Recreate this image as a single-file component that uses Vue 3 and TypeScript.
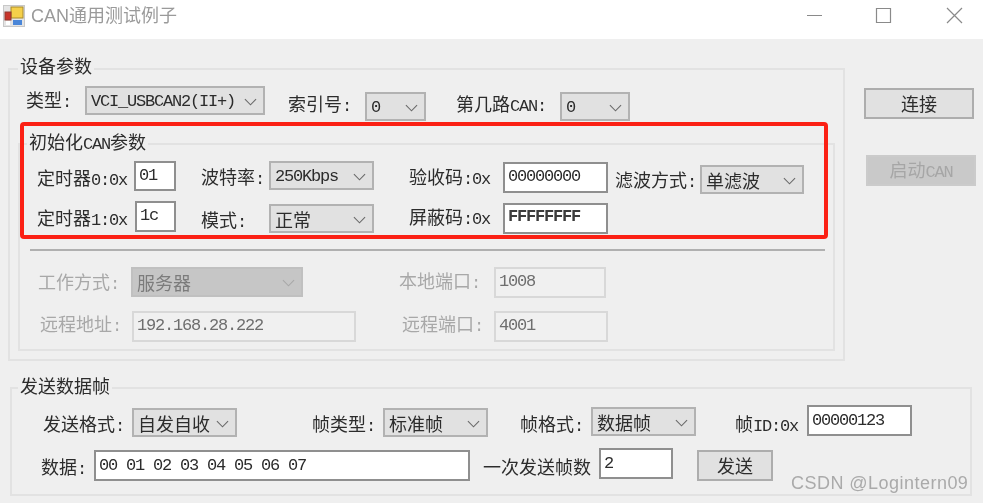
<script setup lang="ts">
const chevron = "M1 1L7 7L13 1"
</script>

<template>
  <div class="win">
    <header class="titlebar">
      <svg class="appicon" width="22" height="22" viewBox="0 0 22 22">
        <rect x="0.5" y="0.5" width="21" height="21" fill="#e4e4e4" stroke="#c8c8c8" />
        <rect x="8" y="2" width="12" height="11" fill="#f5d04a" stroke="#a88a2a" />
        <rect x="2" y="7" width="6" height="8" fill="#c8352b" stroke="#8f3a30" />
        <rect x="10" y="15" width="9" height="5" fill="#4a86d8" />
        <rect x="3" y="16" width="4" height="4" fill="#fff" />
      </svg>
      <span class="apptitle">CAN通用测试例子</span>
      <svg class="caption" width="177" height="18" viewBox="0 0 177 18">
        <path d="M1 9.5H16M70.5 2.5H84.5V16.5H70.5ZM141 2L156 17M156 2L141 17" fill="none" stroke="#8a8a8a" stroke-width="1.2" />
      </svg>
    </header>

    <main class="body">
      <div class="top">
        <section class="group g-device">
          <h3 class="legend l-device">设备参数</h3>
          <div class="row r1">
            <label class="lb w59 ml16">类型<span class="a">:</span></label>
            <div class="sel asc w180 h29"><span class="a">VCI_USBCAN2(II+)</span><svg class="chev" viewBox="0 0 14 8"><path :d="chevron" /></svg></div>
            <label class="lb w77 ml23 mt4">索引号<span class="a">:</span></label>
            <div class="sel asc w61 h29 mt6"><span class="a">0</span><svg class="chev" viewBox="0 0 14 8"><path :d="chevron" /></svg></div>
            <label class="lb w104 ml30 mt4">第几路<span class="a">CAN:</span></label>
            <div class="sel asc w70 h29 mt6"><span class="a">0</span><svg class="chev" viewBox="0 0 14 8"><path :d="chevron" /></svg></div>
          </div>

          <section class="group g-init">
            <h3 class="legend l-init">初始化<span class="a">CAN</span>参数</h3>
            <div class="row ra">
              <label class="lb w97 ml17 mt3">定时器<span class="a">0:0x</span></label>
              <input class="tb w42 h30" value="01" readonly />
              <label class="lb w68 ml25 mt2">波特率<span class="a">:</span></label>
              <div class="sel asc w105 h29"><span class="a">250Kbps</span><svg class="chev" viewBox="0 0 14 8"><path :d="chevron" /></svg></div>
              <label class="lb w94 ml35 mt2">验收码<span class="a">:0x</span></label>
              <input class="tb w105 h31 mt1" value="00000000" readonly />
              <label class="lb w85 ml7 mt5">滤波方式<span class="a">:</span></label>
              <div class="sel w104 h29 mt4">单滤波<svg class="chev" viewBox="0 0 14 8"><path :d="chevron" /></svg></div>
            </div>
            <div class="row rb">
              <label class="lb w98 ml17 mt3">定时器<span class="a">1:0x</span></label>
              <input class="tb w41 h31" value="1c" readonly />
              <label class="lb w68 ml25 mt5">模式<span class="a">:</span></label>
              <div class="sel w105 h29 mt3">正常<svg class="chev" viewBox="0 0 14 8"><path :d="chevron" /></svg></div>
              <label class="lb w94 ml35 mt2">屏蔽码<span class="a">:0x</span></label>
              <input class="tb w105 h31 mt2 strong" value="FFFFFFFF" readonly />
            </div>
            <hr class="sep" />
            <div class="row rc off">
              <label class="lb w93 ml18 mt1">工作方式<span class="a">:</span></label>
              <div class="sel dis w172 h30">服务器<svg class="chev" viewBox="0 0 14 8"><path :d="chevron" /></svg></div>
              <label class="lb w95 ml96">本地端口<span class="a">:</span></label>
              <input class="tb dis w112 h31" value="1008" disabled />
            </div>
            <div class="row rd off">
              <label class="lb w92 ml20">远程地址<span class="a">:</span></label>
              <input class="tb dis w224 h31 mt1" value="192.168.28.222" disabled />
              <label class="lb w92 ml46">远程端口<span class="a">:</span></label>
              <input class="tb dis w114 h31 mt1" value="4001" disabled />
            </div>
          </section>
        </section>

        <aside class="side">
          <button class="btn b-connect">连接</button>
          <button class="btn b-start" disabled>启动<span class="a">CAN</span></button>
        </aside>
      </div>

      <section class="group g-send">
        <h3 class="legend l-send">发送数据帧</h3>
        <div class="row re">
          <label class="lb w89 ml31 mt5">发送格式<span class="a">:</span></label>
          <div class="sel w105 h29 mt3">自发自收<svg class="chev" viewBox="0 0 14 8"><path :d="chevron" /></svg></div>
          <label class="lb w71 ml75 mt5">帧类型<span class="a">:</span></label>
          <div class="sel w105 h29 mt3">标准帧<svg class="chev" viewBox="0 0 14 8"><path :d="chevron" /></svg></div>
          <label class="lb w71 ml32 mt5">帧格式<span class="a">:</span></label>
          <div class="sel w105 h29 mt2">数据帧<svg class="chev" viewBox="0 0 14 8"><path :d="chevron" /></svg></div>
          <label class="lb w72 ml39 mt5">帧<span class="a">ID:0x</span></label>
          <input class="tb w105 h31" value="00000123" readonly />
        </div>
        <div class="row rf">
          <label class="lb w53 ml29 mt5">数据<span class="a">:</span></label>
          <input class="tb w376 h31 mt2" value="00 01 02 03 04 05 06 07" readonly />
          <label class="lb w116 ml13 mt5">一次发送帧数</label>
          <input class="tb w74 h31" value="2" readonly />
          <button class="btn w76 ml24 mt2">发送</button>
        </div>
      </section>
    </main>

    <div class="redbox"></div>
    <div class="mark">CSDN @Logintern09</div>
  </div>
</template>

<style>
html, body { margin: 0; background: #efefef; }
</style>

<style scoped>
.win {
  position: relative;
  width: 983px;
  height: 503px;
  overflow: hidden;
  background: #efefef;
  color: #2c2c2c;
  font-family: "Noto Sans CJK SC", "Liberation Sans", sans-serif;
  font-size: 18px;
  filter: blur(0.45px);
}
.a {
  font-family: "Liberation Mono", monospace;
  font-size: 17px;
  letter-spacing: -1.2px;
  line-height: 1;
}

.titlebar {
  display: flex;
  align-items: center;
  height: 39px;
  padding-left: 3px;
  box-sizing: border-box;
  background: #fff;
}
.appicon { flex: none; margin-top: -8px; }
.apptitle {
  margin-left: 6px;
  margin-top: -8px;
  font-family: "Liberation Sans", "Noto Sans CJK SC", sans-serif;
  font-size: 18px;
  line-height: 24px;
  color: #9a9a9a;
}
.caption { margin-left: auto; margin-top: -10px; }

.body { padding: 29px 0 0 8px; }
.top { display: flex; align-items: flex-start; }

.group {
  position: relative;
  box-sizing: border-box;
  border: 2px solid #e2e2e2;
}
.g-device { flex: none; width: 837px; height: 293px; }
.g-init { width: 817px; height: 208px; margin: 22px 0 0 8px; }
.g-send { width: 962px; height: 109px; margin: 26px 0 0 2px; }

.legend {
  position: absolute;
  margin: 0;
  padding: 0 2px;
  background: #efefef;
  font-size: 18px;
  font-weight: 400;
  line-height: 22px;
}
.l-device { left: 8px; top: -16px; }
.l-init { left: 7px; top: -15px; }
.l-send { left: 6px; top: -15px; }

.row { display: flex; align-items: flex-start; }
.r1 { height: 35px; margin-top: 16px; }
.ra { height: 40px; margin-top: 16px; }
.rb { height: 39px; }
.rc { height: 43px; }
.rd { height: 31px; }
.re { height: 43px; margin-top: 16px; }
.rf { height: 33px; }

.lb { flex: none; box-sizing: border-box; height: 30px; line-height: 26px; white-space: nowrap; }
.off .lb { color: #a8a8a8; }

.sel {
  position: relative;
  flex: none;
  box-sizing: border-box;
  padding-left: 4px;
  border: 2px solid #b2b2b2;
  background: #e1e1e1;
  line-height: 26px;
  white-space: nowrap;
}
.sel.asc { line-height: 21px; }
.sel.dis { background: #c6c6c6; border-color: #c0c0c0; color: #7c7c7c; }
.chev {
  position: absolute;
  right: 6px;
  top: 10px;
  width: 13px;
  height: 8px;
  fill: none;
  stroke: #6a6a6a;
  stroke-width: 1.2;
}
.sel.dis .chev { stroke: #a8a8a8; }

.tb {
  flex: none;
  display: block;
  box-sizing: border-box;
  margin-left: 0;
  margin-right: 0;
  padding: 0 0 2px 3px;
  border: 2px solid #8f8f8f;
  border-radius: 0;
  outline: none;
  background: #fff;
  color: #2c2c2c;
  font-family: "Liberation Mono", monospace;
  font-size: 17px;
  letter-spacing: -1.2px;
}
.g-send .tb { padding-bottom: 0; }
.tb.strong { padding-bottom: 5px; font-weight: 700; color: #3c3c3c; }
.tb.dis {
  border: 2px solid #d8d8d8;
  background: #f0f0f0;
  color: #6e6e6e;
  opacity: 1;
}

.sep {
  margin: 9px 0 16px 10px;
  width: 795px;
  height: 2px;
  border: 0;
  background: #b0b0b0;
}

.side { display: flex; flex-direction: column; margin-left: 19px; padding-top: 20px; }
.btn {
  flex: none;
  box-sizing: border-box;
  height: 31px;
  padding: 0 0 1px;
  border: 2px solid #adadad;
  border-radius: 0;
  background: #e1e1e1;
  color: #2c2c2c;
  font-family: "Noto Sans CJK SC", sans-serif;
  font-size: 18px;
  line-height: 24px;
}
.b-connect { width: 110px; }
.b-start {
  width: 110px;
  margin: 36px 0 0 2px;
  padding-bottom: 3px;
  border-color: #cbcbcb;
  background: #c9c9c9;
  color: #a6a6a6;
}

.redbox {
  position: absolute;
  left: 20px;
  top: 122px;
  width: 808px;
  height: 117px;
  box-sizing: border-box;
  border: 4px solid #fb2014;
  border-radius: 4px;
}
.mark {
  position: absolute;
  left: 791px;
  top: 471px;
  font-family: "Liberation Sans", sans-serif;
  font-size: 18px;
  letter-spacing: 0.47px;
  line-height: 24px;
  color: #aaa;
  white-space: nowrap;
}

.w41 { width: 41px; } .w42 { width: 42px; } .w53 { width: 53px; } .w59 { width: 59px; }
.w61 { width: 61px; } .w68 { width: 68px; } .w70 { width: 70px; } .w71 { width: 71px; }
.w72 { width: 72px; } .w74 { width: 74px; } .w76 { width: 76px; } .w77 { width: 77px; }
.w85 { width: 85px; } .w89 { width: 89px; } .w92 { width: 92px; } .w93 { width: 93px; }
.w94 { width: 94px; } .w95 { width: 95px; } .w97 { width: 97px; } .w98 { width: 98px; }
.w104 { width: 104px; } .w105 { width: 105px; } .w112 { width: 112px; } .w114 { width: 114px; }
.w116 { width: 116px; } .w172 { width: 172px; } .w180 { width: 180px; } .w224 { width: 224px; }
.w376 { width: 376px; }
.h29 { height: 29px; } .h30 { height: 30px; } .h31 { height: 31px; }
.ml7 { margin-left: 7px; } .ml13 { margin-left: 13px; } .ml16 { margin-left: 16px; }
.ml17 { margin-left: 17px; } .ml18 { margin-left: 18px; } .ml20 { margin-left: 20px; }
.ml23 { margin-left: 23px; } .ml24 { margin-left: 24px; } .ml25 { margin-left: 25px; }
.ml29 { margin-left: 29px; } .ml30 { margin-left: 30px; } .ml31 { margin-left: 31px; }
.ml32 { margin-left: 32px; } .ml35 { margin-left: 35px; } .ml39 { margin-left: 39px; }
.ml46 { margin-left: 46px; } .ml75 { margin-left: 75px; } .ml96 { margin-left: 96px; }
.mt1 { margin-top: 1px; } .mt2 { margin-top: 2px; } .mt3 { margin-top: 3px; }
.mt4 { margin-top: 4px; } .mt5 { margin-top: 5px; } .mt6 { margin-top: 6px; }
</style>
